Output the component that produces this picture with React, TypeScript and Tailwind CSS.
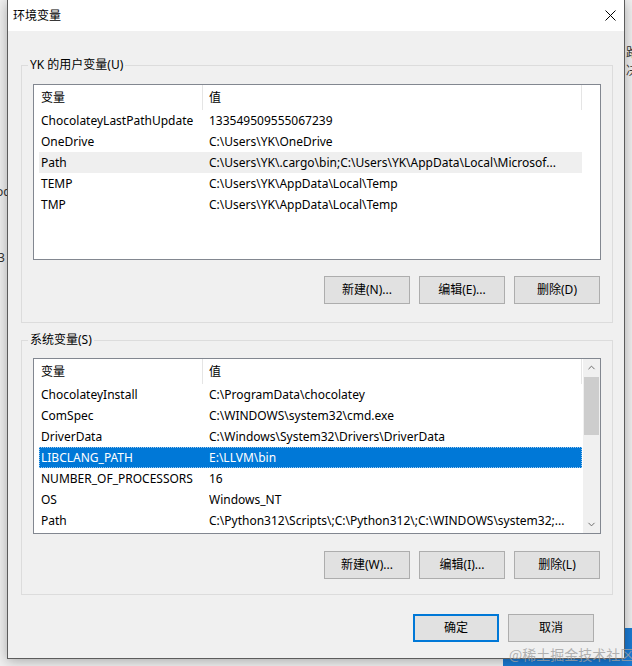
import { ChevronDown, ChevronUp } from "lucide-react";

type Row = [string, string];

const userVars: Row[] = [
  ["ChocolateyLastPathUpdate", "133549509555067239"],
  ["OneDrive", "C:\\Users\\YK\\OneDrive"],
  ["Path", "C:\\Users\\YK\\.cargo\\bin;C:\\Users\\YK\\AppData\\Local\\Microsof..."],
  ["TEMP", "C:\\Users\\YK\\AppData\\Local\\Temp"],
  ["TMP", "C:\\Users\\YK\\AppData\\Local\\Temp"],
];

const systemVars: Row[] = [
  ["ChocolateyInstall", "C:\\ProgramData\\chocolatey"],
  ["ComSpec", "C:\\WINDOWS\\system32\\cmd.exe"],
  ["DriverData", "C:\\Windows\\System32\\Drivers\\DriverData"],
  ["LIBCLANG_PATH", "E:\\LLVM\\bin"],
  ["NUMBER_OF_PROCESSORS", "16"],
  ["OS", "Windows_NT"],
  ["Path", "C:\\Python312\\Scripts\\;C:\\Python312\\;C:\\WINDOWS\\system32;..."],
];

const Btn = ({ label, primary = false }: { label: string; primary?: boolean }) => (
  <button
    className={`w-[86px] h-[28px] bg-[#e1e1e1] text-[12px] text-black flex items-center justify-center ${
      primary ? "border-2 border-[#0078d7]" : "border border-[#adadad]"
    }`}
  >
    {label}
  </button>
);

const VarList = ({
  rows,
  hot,
  selected,
  scroll = false,
}: {
  rows: Row[];
  hot?: number;
  selected?: number;
  scroll?: boolean;
}) => (
  <div className="flex h-[176px] border border-[#828790] bg-white overflow-hidden">
    <div className="w-[548px] flex flex-col shrink-0">
      {/* header */}
      <div className="flex h-[25px] shrink-0">
        <div className="w-[169px] pl-[7px] flex items-center border-r border-[#e5e5e5]">变量</div>
        <div className="w-[379px] pl-[6px] flex items-center border-r border-[#e5e5e5]">值</div>
      </div>
      {/* rows */}
      <div className="pl-[5px] flex flex-col">
        {rows.map(([name, value], i) => (
          <div
            key={name + i}
            className={`flex items-center h-[21px] shrink-0 whitespace-nowrap ${
              i === selected
                ? "bg-[#0078d7] text-white outline-1 outline-dotted outline-[#9cc8ee] -outline-offset-1"
                : i === hot
                ? "bg-[#efefef]"
                : ""
            }`}
          >
            <span className="w-[170px] shrink-0 pl-[2px]">{name}</span>
            <span className="flex-1 overflow-hidden">{value}</span>
          </div>
        ))}
      </div>
    </div>
    {scroll && (
      <div className="w-[17px] ml-auto bg-[#f0f0f0] flex flex-col">
        <div className="h-[17px] flex items-center justify-center text-[#606060]">
          <ChevronUp className="w-[11px] h-[11px]" strokeWidth={2} />
        </div>
        <div className="h-[58px] mx-[1px] mt-px bg-[#cdcdcd]" />
        <div className="mt-auto h-[17px] flex items-center justify-center text-[#606060]">
          <ChevronDown className="w-[11px] h-[11px]" strokeWidth={2} />
        </div>
      </div>
    )}
  </div>
);

const Group = ({ title, children, className }: { title: string; children: React.ReactNode; className: string }) => (
  <div className={`relative ml-[13px] w-[592px] border border-[#dcdcdc] px-[11px] ${className}`}>
    <span className="absolute -top-[9px] left-[6px] px-[2px] bg-[#f0f0f0] leading-[16px]">{title}</span>
    {children}
  </div>
);

export default function App() {
  return (
    <div className="relative w-[632px] h-[666px] overflow-hidden bg-[#f0f0f0] pl-[7px] text-[12px] text-black font-['Segoe_UI','Noto_Sans','Noto_Sans_CJK_SC',sans-serif]">
      {/* desktop behind the dialog */}
      <span className="absolute left-[-4px] top-[183px] text-[#333]">oc</span>
      <span className="absolute left-[-2px] top-[249px] text-[#333]">3</span>
      <span className="absolute left-[626px] top-[44px] text-[#333]">路</span>
      <span className="absolute left-[626px] top-[62px] text-[#333]">决</span>
      <div className="absolute left-[503px] top-[628px] right-0 bottom-0 bg-[#1a7ad3]" />

      {/* dialog */}
      <div className="relative z-10 w-[618px] h-[659px] flex flex-col bg-[#f0f0f0] border-x border-b border-[#5c5c5c] shadow-[0_2px_12px_rgba(0,0,0,0.3)]">
        <div className="h-[31px] shrink-0 bg-white flex items-center justify-between pl-[5px] pr-[8px]">
          <span>环境变量</span>
          <svg width="11" height="11" viewBox="0 0 11 11" stroke="#000" strokeWidth="1">
            <path d="M0.5 0.5L10.5 10.5M10.5 0.5L0.5 10.5" />
          </svg>
        </div>

        <Group title="YK 的用户变量(U)" className="mt-[34px] pt-[18px] pb-[18px]">
          <VarList rows={userVars} hot={2} />
          <div className="flex justify-end gap-[9px] mt-[16px] pr-px">
            <Btn label="新建(N)..." />
            <Btn label="编辑(E)..." />
            <Btn label="删除(D)" />
          </div>
        </Group>

        <Group title="系统变量(S)" className="mt-[17px] pt-[17px] pb-[15px]">
          <VarList rows={systemVars} selected={3} scroll />
          <div className="flex justify-end gap-[9px] mt-[17px] pr-px">
            <Btn label="新建(W)..." />
            <Btn label="编辑(I)..." />
            <Btn label="删除(L)" />
          </div>
        </Group>

        <div className="flex justify-end gap-[9px] mt-[19px] pr-[30px]">
          <Btn label="确定" primary />
          <Btn label="取消" />
        </div>
      </div>

      {/* watermark */}
      <span className="absolute z-20 left-[509px] top-[645px] whitespace-nowrap text-[14px] leading-[18px] text-[rgba(160,160,160,0.8)] font-['Noto_Sans_CJK_SC',sans-serif]">
        @稀土掘金技术社区
      </span>
    </div>
  );
}
